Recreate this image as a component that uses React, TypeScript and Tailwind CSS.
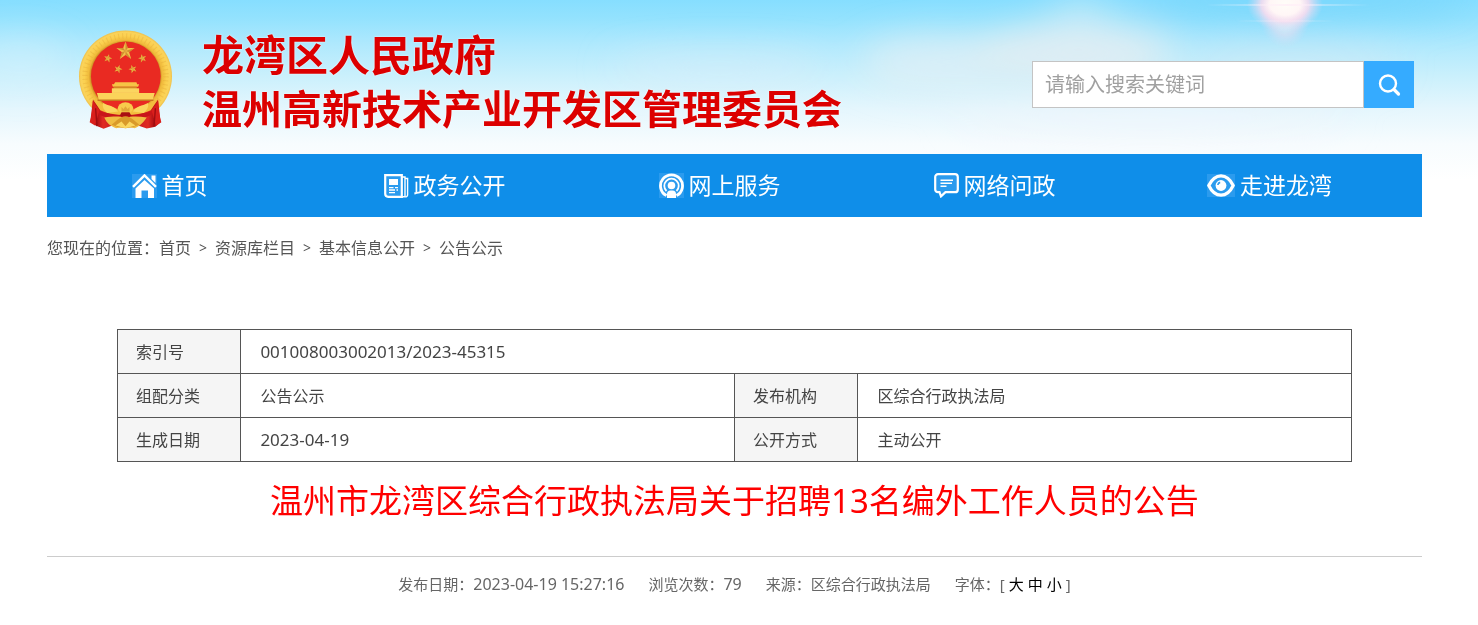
import type { ReactNode } from "react"

const navItems: { label: string; icon: ReactNode }[] = [
  { label: "首页", icon: <HomeIcon /> },
  { label: "政务公开", icon: <NewsIcon /> },
  { label: "网上服务", icon: <ServiceIcon /> },
  { label: "网络问政", icon: <MessageIcon /> },
  { label: "走进龙湾", icon: <EyeIcon /> },
]

const crumbs = ["首页", "资源库栏目", "基本信息公开", "公告公示"]

function HomeIcon() {
  return (
    <svg width="25" height="24" viewBox="0 0 25 24" fill="none" aria-hidden="true">
      <path d="M0 0h25v24H0z" fill="#2b9bee" />
      <path d="M19.500 1.500h4v7.500l-4-4z" fill="#fff" />
      <path d="M1 12.800 12.500 1.400 24 12.800" stroke="#fff" strokeWidth="2.400" />
      <path d="M12.500 6 22 14.500V24h-6v-7.500H9.500V24h-6v-9.500z" fill="#fff" />
    </svg>
  )
}

function NewsIcon() {
  return (
    <svg width="25" height="24" viewBox="0 0 25 24" fill="none" stroke="#fff" aria-hidden="true">
      <path d="M1.200 1.200h16.600v21.600H4.200a3 3 0 0 1-3-3z" strokeWidth="2.200" fill="#2b9bee" />
      <path d="M18 3h3v19.800h-4M21 4.500h2.600v16.300a2 2 0 0 1-2.600 2" strokeWidth="1.400" />
      <path d="M5 5h9v6H5z" fill="#fff" stroke="none" />
      <path d="M5 13.600h4.500M11 13.600h3M5 16h6M12.500 16H14M5 18.600h6" strokeWidth="1.300" />
    </svg>
  )
}

function ServiceIcon() {
  return (
    <svg width="25" height="25" viewBox="0 0 25 25" fill="none" stroke="#fff" aria-hidden="true">
      <path d="M0 0h25v25H0z" fill="#2b9bee" stroke="none" />
      <path d="M7.500 22.600A11 11 0 1 1 17.500 22.600" strokeWidth="2.800" />
      <path d="M7.500 18A7.200 7.200 0 1 1 17.500 18" strokeWidth="1.800" />
      <circle cx="12.500" cy="12.500" r="3.800" fill="#fff" stroke="none" />
      <path d="M8 25v-4a3.500 3.500 0 0 1 3.500-3.500h2A3.500 3.500 0 0 1 17 21v4z" fill="#fff" stroke="none" />
    </svg>
  )
}

function MessageIcon() {
  return (
    <svg width="25" height="25" viewBox="0 0 25 25" fill="none" stroke="#fff" aria-hidden="true">
      <path
        d="M4 1.200h17a2.800 2.800 0 0 1 2.800 2.800v12.400a2.800 2.800 0 0 1-2.800 2.800H11.500L7 23.400l-1.500-4.200H4a2.800 2.800 0 0 1-2.800-2.800V4A2.800 2.800 0 0 1 4 1.200z"
        strokeWidth="2.200"
        fill="#2b9bee"
      />
      <path d="M6.500 7.200H19M6.500 10.200H18M6.500 13.200h6" strokeWidth="1.600" />
    </svg>
  )
}

function EyeIcon() {
  return (
    <svg width="28" height="23" viewBox="0 0 28 23" fill="none" stroke="#fff" aria-hidden="true">
      <path d="M0 0h28v23H0z" fill="#2b9bee" stroke="none" />
      <path d="M1.800 11.500C5 4.800 9 1.800 14 1.800S23 4.800 26.200 11.500C23 18.200 19 21.200 14 21.200S5 18.200 1.800 11.500z" strokeWidth="3.200" />
      <circle cx="14" cy="11.500" r="5.400" fill="#fff" stroke="none" />
      <path d="M10.800 11a3 3 0 0 1 2.400-2.600" stroke="#2b9bee" strokeWidth="1.600" />
    </svg>
  )
}

function Star({ x, y, r, turn = 0 }: { x: number; y: number; r: number; turn?: number }) {
  return (
    <g transform={`translate(${x} ${y}) rotate(${turn}) scale(${r})`}>
      <path d="M0-1 .24-.32.95-.31.38.12.59.81 0 .4-.59.81-.38.12-.95-.31-.24-.32z" fill="#f3c04b" />
      <path d="M0-1 .24-.32 0 0zM.95-.31.38.12 0 0zM.59.81 0 .4 0 0zM-.59.81-.38.12 0 0zM-.95-.31-.24-.32 0 0z" fill="#b9701c" opacity=".6" />
    </g>
  )
}

function Emblem() {
  return (
    <svg width="93" height="100" viewBox="56 45 280 300" role="img" aria-label="国徽">
      <defs>
        <radialGradient id="ring" cx="50%" cy="50%" r="50%">
          <stop offset="74%" stopColor="#c98a22" />
          <stop offset="79%" stopColor="#efb93a" />
          <stop offset="88%" stopColor="#fbd04f" />
          <stop offset="96%" stopColor="#fad35a" />
          <stop offset="100%" stopColor="#efc04a" />
        </radialGradient>
        <linearGradient id="drape" x1="0" x2="1">
          <stop offset="0" stopColor="#d9201c" />
          <stop offset=".1" stopColor="#b01114" />
          <stop offset=".18" stopColor="#e02a22" />
          <stop offset=".5" stopColor="#b5141a" />
          <stop offset=".82" stopColor="#e02a22" />
          <stop offset=".9" stopColor="#b01114" />
          <stop offset="1" stopColor="#dc221d" />
        </linearGradient>
      </defs>
      <ellipse cx="196" cy="184" rx="140" ry="138" fill="url(#ring)" />
      <circle cx="196" cy="184" r="122" fill="none" stroke="#dea031" strokeWidth="16" strokeDasharray="3 9" opacity=".3" />
      <circle cx="197" cy="184" r="105" fill="#e92a22" />
      <Star x={196} y={108} r={29} />
      <Star x={143} y={130} r={13} turn={15} />
      <Star x={247} y={130} r={13} turn={-15} />
      <Star x={174} y={162} r={13} turn={20} />
      <Star x={218} y={162} r={13} turn={-20} />
      {/* gate tower */}
      <path d="M165 202h64l2 6h6l-3 7h-76l-3-7h6z" fill="#f6c445" />
      <path d="M160 215h70v7h-70z" fill="#d28a25" />
      <path d="M155 220h82v14h-82z" fill="#fbd560" />
      <path d="M110 234h174l-6 22H116z" fill="#fbd35a" />
      <path d="M112 254h168v4H112z" fill="#c9781f" />
      {/* ribbons and wheat knot */}
      <path d="M98 254c24 20 46 36 98 40 52-4 74-20 98-40l8 68-16 14-26 5-24-8H154l-24 9-24-10-16-12z" fill="url(#drape)" />
      <path d="M98 254c20 12 40 18 60 22l38 18 38-18c20-4 40-10 60-22l-22 32c-22 10-48 18-76 22-28-4-54-12-76-22z" fill="#f3bd3e" />
      <path d="M128 264c20 10 34 8 46 26l-32 4c-10-8-16-16-14-30zM264 264c-20 10-34 8-46 26l32 4c10-8 16-16 14-30z" fill="#fbd65e" />
      <path d="M112 286c26 10 54 14 84 14s58-4 84-14l-6 14c-26 10-50 14-78 14s-52-4-78-14z" fill="#c8161a" />
      <path d="M172 282a24 20 0 0 1 48 0l-10 12h-28z" fill="#f8cb4c" />
      <path d="M184 276l6 6 6-8 6 8 6-6v14h-24z" fill="#c77b20" opacity=".45" />
      <path d="M184 292h24l6 12h-36z" fill="#a90e12" />
      <path d="M132 308c20-3 38-4 50-2l14 8 14-8c14-2 32-1 50 2-12 18-24 28-36 32l-28-6-28 6c-16-5-28-14-36-32z" fill="#f0bd42" />
      <path d="M154 330c16-14 26-24 42-26 16 2 26 12 42 26-14 6-28 10-42 10s-28-4-42-10z" fill="#d99a2a" />
      <path d="M166 332l18-12 12 14 12-14 18 12-30 8z" fill="#fbd760" />
      <path d="M98 258c-2 26-4 48-10 64l16 10 14-46zM294 258c2 26 4 48 10 64l-16 10-14-46z" fill="#d91f1c" />
      <path d="M106 280l4 54M286 280l-4 54" stroke="#9d0d10" strokeWidth="4" />
    </svg>
  )
}

function Sky() {
  return (
    <svg
      className="absolute inset-x-0 top-0 -z-10 h-[180px] w-full"
      viewBox="0 0 1478 180"
      preserveAspectRatio="none"
      aria-hidden="true"
    >
      <defs>
        <linearGradient id="sky" x1="0" y1="0" x2="0" y2="1">
          <stop offset="0" stopColor="#86deff" />
          <stop offset=".1" stopColor="#93e2fe" />
          <stop offset=".25" stopColor="#b0e9fd" />
          <stop offset=".42" stopColor="#caf0fc" />
          <stop offset=".6" stopColor="#e4f6fd" />
          <stop offset=".8" stopColor="#f7fcfe" />
          <stop offset="1" stopColor="#fff" />
        </linearGradient>
        <radialGradient id="sun">
          <stop offset="0" stopColor="#fffdf8" />
          <stop offset=".4" stopColor="#fff6f6" />
          <stop offset=".62" stopColor="#fbdcee" stopOpacity=".85" />
          <stop offset="1" stopColor="#d9dcf6" stopOpacity="0" />
        </radialGradient>
        <linearGradient id="flare">
          <stop offset="0" stopColor="#fff" stopOpacity="0" />
          <stop offset=".5" stopColor="#ffeaf6" />
          <stop offset="1" stopColor="#fff" stopOpacity="0" />
        </linearGradient>
        <filter id="haze" x="-30%" y="-60%" width="160%" height="220%">
          <feGaussianBlur stdDeviation="18" />
        </filter>
      </defs>
      <rect width="1478" height="180" fill="url(#sky)" />
      <g filter="url(#haze)">
        <ellipse cx="20" cy="60" rx="50" ry="22" fill="#dff4fc" opacity=".4" />
        <ellipse cx="720" cy="68" rx="110" ry="14" fill="#dceefa" opacity=".6" />
        <ellipse cx="940" cy="62" rx="80" ry="26" fill="#e6eff5" opacity=".7" />
        <ellipse cx="1075" cy="54" rx="100" ry="30" fill="#e3edf2" opacity=".9" />
        <ellipse cx="1080" cy="16" rx="30" ry="22" fill="#d3eef8" opacity=".5" />
        <ellipse cx="1290" cy="66" rx="110" ry="16" fill="#d6e8f4" opacity=".6" />
        <ellipse cx="1300" cy="0" rx="170" ry="18" fill="#72d3fb" opacity=".7" />
        <ellipse cx="1150" cy="120" rx="200" ry="16" fill="#f1f5fc" opacity=".6" />
      </g>
      <ellipse cx="1285" cy="14" rx="26" ry="34" fill="url(#sun)" opacity=".5" />
      <ellipse cx="1285" cy="4" rx="38" ry="28" fill="url(#sun)" />
      <rect x="1205" y="4" width="165" height="2" fill="url(#flare)" opacity=".6" />
      <rect x="1235" y="20" width="100" height="2" fill="url(#flare)" opacity=".3" />
    </svg>
  )
}

function Header() {
  return (
    <header className="flex items-start justify-between pt-7 pr-2 pb-[18px] pl-8">
      <div className="flex items-start gap-[30px]">
        <div className="pt-0.5">
          <Emblem />
        </div>
        <h1 className="text-[40px] leading-[54px] font-bold whitespace-nowrap text-[#dc0000] [text-shadow:0_0_2px_#fff]">
          <span className="block text-[42px]">龙湾区人民政府</span>
          <span className="block">温州高新技术产业开发区管理委员会</span>
        </h1>
      </div>
      <form className="mt-[33px] flex h-[47px]" onSubmit={(e) => e.preventDefault()}>
        <input
          type="text"
          aria-label="搜索"
          placeholder="请输入搜索关键词"
          className="w-[332px] border border-[#c4c4c4] bg-white px-3 text-xl text-[#555] placeholder:text-[#a0a0a0]"
        />
        <button type="submit" aria-label="搜索" className="flex w-[50px] items-center justify-center bg-[#35abff]">
          <svg width="24" height="24" viewBox="0 0 24 24" fill="none" stroke="#fff" aria-hidden="true">
            <circle cx="11" cy="10.500" r="8" strokeWidth="2.400" />
            <path d="M17 16.500 21.500 21" strokeWidth="3.200" strokeLinecap="round" />
          </svg>
        </button>
      </form>
    </header>
  )
}

function Label({ children }: { children: ReactNode }) {
  return (
    <th scope="row" className="h-11 border border-[#555] bg-[#f5f5f5] pl-[18px] text-left font-normal">
      {children}
    </th>
  )
}

export default function App() {
  return (
    <div className="relative isolate min-h-screen overflow-hidden pr-14 pl-[47px] font-['Noto_Sans','Noto_Sans_CJK_SC',sans-serif] text-base text-[#555]">
      <Sky />
      <Header />

      <nav className="flex bg-[#0f8ee9] text-[23px] text-white">
        {navItems.map((item) => (
          <a key={item.label} href="#" className="flex h-[63px] flex-1 items-center justify-center gap-[5px] pr-[30px]">
            {item.icon}
            {item.label}
          </a>
        ))}
      </nav>

      <div className="flex h-[62px] items-center">
        <span>您现在的位置：</span>
        {crumbs.map((crumb, i) => (
          <span key={crumb} className="flex items-center">
            {i > 0 && <span className="px-2 text-sm">&gt;</span>}
            <a href="#">{crumb}</a>
          </span>
        ))}
      </div>

      <main>
        <div className="px-[70px] pt-[50px]">
          <table className="w-full table-fixed border-collapse text-[#444]">
            <colgroup>
              <col className="w-1/10" />
              <col className="w-2/5" />
              <col className="w-1/10" />
              <col className="w-2/5" />
            </colgroup>
            <tbody>
              <tr>
                <Label>索引号</Label>
                <td colSpan={3} className="border border-[#555] bg-white pl-[19px] text-[17px]">
                  001008003002013/2023-45315
                </td>
              </tr>
              <tr>
                <Label>组配分类</Label>
                <td className="border border-[#555] bg-white pl-[19px]">公告公示</td>
                <Label>发布机构</Label>
                <td className="border border-[#555] bg-white pl-[19px]">区综合行政执法局</td>
              </tr>
              <tr>
                <Label>生成日期</Label>
                <td className="border border-[#555] bg-white pl-[19px] text-[17px]">2023-04-19</td>
                <Label>公开方式</Label>
                <td className="border border-[#555] bg-white pl-[19px]">主动公开</td>
              </tr>
            </tbody>
          </table>
        </div>

        <h2 className="border-b border-[#ccc] pb-4 text-center text-[33px] leading-[78px] text-[#ff0000]">
          温州市龙湾区综合行政执法局关于招聘13名编外工作人员的公告
        </h2>

        <div className="flex justify-center gap-6 pt-3 text-[15px] leading-[30px] text-[#666]">
          <span>
            发布日期：<span className="text-base">2023-04-19 15:27:16</span>
          </span>
          <span>
            浏览次数：<span className="text-base">79</span>
          </span>
          <span>来源：区综合行政执法局</span>
          <span className="flex gap-1">
            <span>字体：[</span>
            <button type="button" className="text-black">大</button>
            <button type="button" className="text-black">中</button>
            <button type="button" className="text-black">小</button>
            <span>]</span>
          </span>
        </div>
      </main>
    </div>
  )
}
